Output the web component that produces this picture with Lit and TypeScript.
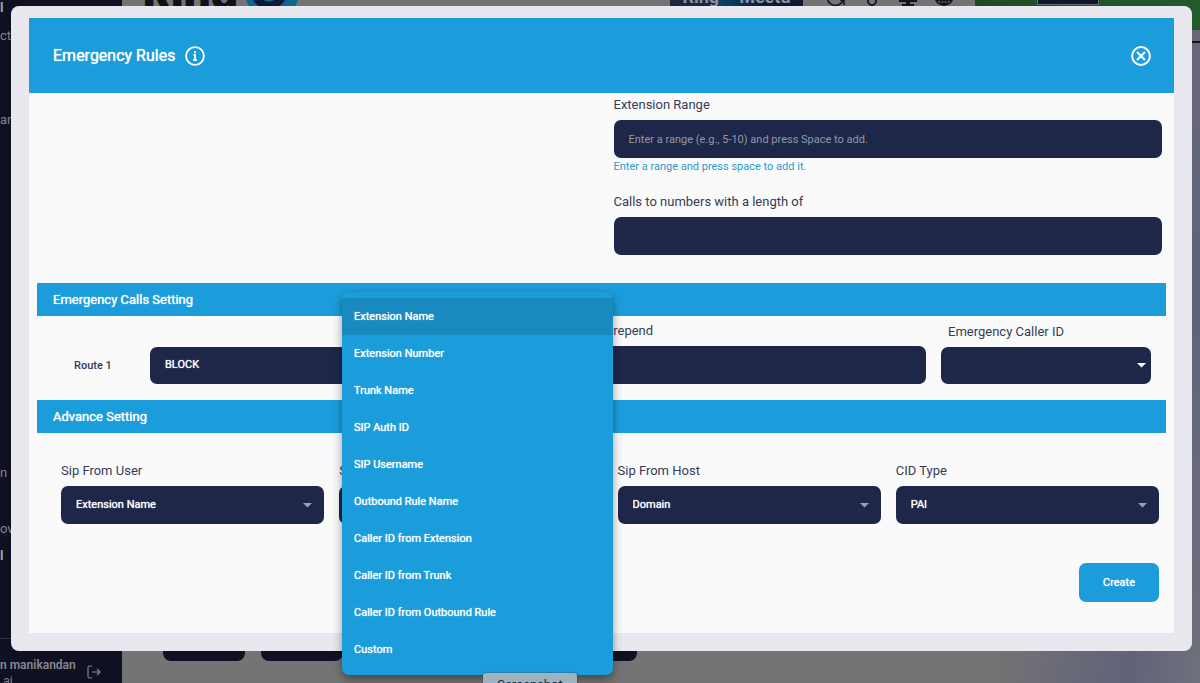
import { LitElement, html, css } from "lit";
import { customElement, property, state } from "lit/decorators.js";

const SIDE_ITEMS = [
  { text: "l", gap: 0, strong: true },
  { text: "cte", gap: 12, strong: false },
  { text: "an", gap: 68, strong: false },
  { text: "n", gap: 337, strong: false },
  { text: "ov", gap: 40, strong: false },
  { text: "l", gap: 11, strong: true },
];

const SIP_OPTIONS = [
  "Extension Name",
  "Extension Number",
  "Trunk Name",
  "SIP Auth ID",
  "SIP Username",
  "Outbound Rule Name",
  "Caller ID from Extension",
  "Caller ID from Trunk",
  "Caller ID from Outbound Rule",
  "Custom",
];

@customElement("page-backdrop")
export class PageBackdrop extends LitElement {
  static styles = css`
    :host {
      display: grid;
      grid-template-columns: 122px 1fr;
      font-family: Roboto, sans-serif;
    }
    .side {
      background: #0f1022;
      color: #85858d;
      display: flex;
      flex-direction: column;
      overflow: hidden;
      font-size: 13px;
      line-height: 16px;
    }
    .side ul {
      list-style: none;
      margin: 0;
      padding: 0;
      flex: 1;
    }
    .strong {
      font-weight: 700;
      color: #a5a5ac;
    }
    .user {
      border-top: 1px solid #303140;
      height: 45px;
      box-sizing: border-box;
      display: flex;
      justify-content: space-between;
      padding: 18px 21px 0 0;
      font-size: 12px;
    }
    .user b {
      display: block;
      font-weight: 600;
      color: #88888f;
    }
    .user svg {
      margin-top: 8px;
    }
    .main {
      display: flex;
      flex-direction: column;
      justify-content: space-between;
      overflow: hidden;
      background: linear-gradient(100deg, #747474 82%, #60627a 94%, #70717c);
    }
    .top {
      display: flex;
      align-items: flex-end;
      height: 8px;
    }
    .brand {
      display: flex;
      align-items: flex-end;
      flex: 1;
      padding-left: 21px;
      font: 900 42px/28px Inter, sans-serif;
      color: #101018;
    }
    .ad {
      display: flex;
      justify-content: center;
      align-items: flex-end;
      gap: 20px;
      width: 133px;
      height: 48px;
      background: linear-gradient(90deg, #20253f 36%, #0d4262 37%, #0c1a33 75%);
      color: #8991a0;
      font: 700 18px/22px Roboto, sans-serif;
    }
    .icons {
      display: flex;
      gap: 16px;
      padding: 0 21px 0 23px;
    }
    .promo {
      width: 225px;
      height: 30px;
      align-self: flex-start;
      background: linear-gradient(90deg, #1f4a25, #225a2b);
      display: flex;
    }
    .promo i {
      width: 60px;
      height: 4px;
      margin-left: 62px;
      background: #11162a;
      border: 1px solid #66706a;
      border-top: 0;
    }
    .rule {
      align-self: flex-end;
      width: 8px;
      height: 2px;
      margin: 33px 0 auto;
      background: #15151c;
    }
    .bottom {
      display: flex;
      gap: 16px;
      padding-left: 41px;
      height: 62px;
    }
    .bottom button {
      font: inherit;
      border: 0;
      border-radius: 8px;
      background: #0f1022;
      height: 40px;
      width: 82px;
      padding: 0;
    }
    .bottom .wide {
      width: 278px;
    }
  `;

  render() {
    return html`
      <nav class="side" aria-label="Main">
        <ul>
          ${SIDE_ITEMS.map(
            (item) => html`<li class=${item.strong ? "strong" : ""} style="padding-top:${item.gap}px">${item.text}</li>`
          )}
        </ul>
        <div class="user">
          <div><b>n manikandan</b>.ai</div>
          <svg width="14" height="14" viewBox="0 0 14 14" fill="none" stroke="#85858d" stroke-width="1.2">
            <path d="M5 1H2.5A1.5 1.5 0 0 0 1 2.5v9A1.5 1.5 0 0 0 2.5 13H5M5 7h8M10 4l3 3-3 3" />
          </svg>
        </div>
      </nav>
      <div class="main">
        <div class="top">
          <div class="brand">
            <span>Ring</span>
            <svg width="60" height="28" viewBox="0 0 60 28">
              <circle cx="34" cy="12" r="27" fill="#0d6590" />
              <circle cx="31" cy="10" r="19" fill="#10183a" />
              <path d="M25 18q6 4 12 0" fill="none" stroke="#0d6590" stroke-width="3" />
            </svg>
          </div>
          <div class="ad"><span>Ring</span><span>Meetu</span></div>
          <div class="icons">
            <svg width="20" height="20" viewBox="0 0 20 20" fill="none" stroke="#15151c" stroke-width="1.6"><path d="M17 12a8 8 0 1 1 0-5M18 17v-5h-4" /></svg>
            <svg width="20" height="20" viewBox="0 0 20 20" fill="none" stroke="#15151c" stroke-width="1.8"><path d="M10 2v8" /><circle cx="10" cy="13" r="4" /></svg>
            <svg width="20" height="20" viewBox="0 0 20 20" fill="#15151c"><path d="M1 1h18v13h-7v2h4v2H4v-2h4v-2H1z" /></svg>
            <svg width="20" height="20" viewBox="0 0 20 20" fill="none" stroke="#15151c" stroke-width="1.8"><circle cx="10" cy="8" r="9" /><ellipse cx="10" cy="8" rx="4" ry="9" /><path d="M2 12h16M10 0v17" /></svg>
          </div>
          <div class="promo"><i></i></div>
        </div>
        <div class="rule"></div>
        <div class="bottom">
          <button type="button" tabindex="-1"></button>
          <button type="button" tabindex="-1"></button>
          <button type="button" class="wide" tabindex="-1"></button>
        </div>
      </div>
    `;
  }
}

@customElement("select-field")
export class SelectField extends LitElement {
  @property() label = "";
  @property() value = "";

  static styles = css`
    :host {
      display: block;
      min-width: 0;
    }
    label {
      display: block;
      font-size: 13px;
      line-height: 20px;
      margin-bottom: 5px;
    }
    .box {
      display: grid;
      align-items: center;
    }
    .box > * {
      grid-area: 1 / 1;
    }
    select {
      appearance: none;
      width: 100%;
      height: 38px;
      border: 0;
      border-radius: 7px;
      padding: 0 40px 0 15px;
      background: #1e2749;
      color: #fff;
      font: 400 11px/16px Roboto, sans-serif;
      text-shadow: 0 0 1px currentColor;
    }
    svg {
      justify-self: end;
      margin-right: 12px;
      pointer-events: none;
    }
  `;

  render() {
    return html`
      <label for="s">${this.label}</label>
      <div class="box">
        <select id="s"><option>${this.value}</option></select>
        <svg width="9" height="5" viewBox="0 0 9 5"><path d="M0 0h9L4.500 4.500z" fill="#9a9fb0" /></svg>
      </div>
    `;
  }
}

@customElement("app-root")
export class AppRoot extends LitElement {
  @state() selected = SIP_OPTIONS[0];

  static styles = css`
    :host {
      display: grid;
      height: 100vh;
      overflow: hidden;
      position: relative;
      font-family: Roboto, sans-serif;
      color: #363a56;
    }
    page-backdrop,
    .dialog {
      grid-area: 1 / 1;
      min-width: 0;
      min-height: 0;
    }
    .dialog {
      position: relative;
      align-self: start;
      margin: 6px 8px 0 11px;
      padding: 12px 18px 18px;
      background: #e9e8ef;
      border-radius: 8px;
    }
    header {
      display: flex;
      align-items: center;
      gap: 10px;
      height: 75px;
      padding: 0 23px 0 24px;
      background: #1c9ddb;
      color: #fff;
    }
    h1,
    h2,
    .picker select,
    .create,
    .menu {
      font-weight: 400;
      text-shadow: 0 0 1px currentColor;
    }
    h1 {
      margin: 0;
      font-size: 16px;
      line-height: 24px;
    }
    header button {
      display: flex;
      border: 0;
      padding: 0;
      background: none;
      color: inherit;
    }
    header .close {
      margin-left: auto;
    }
    .body {
      background: #fafafb;
      padding: 2px 8px 31px;
    }
    .ranges {
      display: grid;
      grid-template-columns: 1fr 1fr;
      padding: 0 4px 28px 8px;
    }
    .ranges > div {
      grid-column: 2;
      padding-left: 10px;
    }
    .label {
      display: block;
      font-size: 13px;
      line-height: 20px;
    }
    .input {
      display: block;
      box-sizing: border-box;
      width: 100%;
      height: 38px;
      border: 0;
      border-radius: 7px;
      padding: 0 15px;
      background: #1e2749;
      color: #fff;
      font: 400 11px/16px Roboto, sans-serif;
    }
    .input::placeholder {
      color: #9297ab;
      opacity: 1;
    }
    .ranges .label {
      margin-bottom: 5px;
    }
    .hint {
      margin: 0;
      padding: 1px 0 17px;
      font-size: 11px;
      line-height: 16px;
      color: #2a9cc9;
    }
    h2 {
      margin: 0;
      height: 33px;
      padding: 0 16px;
      background: #1c9ddb;
      color: #fff;
      font-size: 13px;
      line-height: 33px;
    }
    .route {
      display: grid;
      grid-template-columns: 98px 1fr 328px 210px;
      column-gap: 15px;
      align-items: center;
      padding: 5px 15px 16px 0;
    }
    .route .label {
      padding-left: 7px;
      margin-bottom: 5px;
    }
    .name {
      padding: 25px 0 0 37px;
      font-size: 11px;
      font-weight: 500;
    }
    .action {
      padding-top: 25px;
    }
    .picker {
      display: grid;
      align-items: center;
    }
    .picker > * {
      grid-area: 1 / 1;
    }
    .picker select {
      appearance: none;
      width: 100%;
      height: 37px;
      border: 0;
      border-radius: 7px;
      padding: 0 15px;
      background: #1e2749;
      color: #fff;
      font: 400 11px/16px Roboto, sans-serif;
    }
    .picker svg {
      justify-self: end;
      margin-right: 5px;
      pointer-events: none;
    }
    .advance {
      display: grid;
      grid-template-columns: repeat(4, 1fr);
      gap: 15px;
      padding: 28px 7px 0 24px;
    }
    footer {
      display: flex;
      justify-content: flex-end;
      padding: 39px 7px 0;
    }
    .create {
      border: 0;
      border-radius: 7px;
      width: 80px;
      height: 39px;
      background: #1c9ddb;
      color: #fff;
      font: 400 11px/16px Roboto, sans-serif;
    }
    .menu {
      position: absolute;
      left: 342px;
      top: 292px;
      width: 271px;
      margin: 0;
      padding: 6px 0 7px;
      box-sizing: border-box;
      list-style: none;
      background: #1c9ddb;
      border-radius: 7px;
      box-shadow: 0 4px 10px rgba(0, 0, 0, 0.4);
      color: #fff;
      font-size: 11px;
      line-height: 37px;
    }
    .menu li {
      padding: 0 12px;
    }
    .menu .on {
      background: #188abf;
    }
    .tip {
      position: absolute;
      left: 483px;
      top: 673px;
      width: 94px;
      text-align: center;
      border-radius: 3px;
      background: #9bb4c0;
      color: #1f2a35;
      font-size: 13px;
      line-height: 24px;
      box-shadow: 0 0 2px #333;
    }
  `;

  render() {
    return html`
      <page-backdrop></page-backdrop>
      <section class="dialog" role="dialog" aria-labelledby="title">
        <header>
          <h1 id="title">Emergency Rules</h1>
          <button type="button" aria-label="Information">
            <svg width="20" height="20" viewBox="0 0 20 20" fill="none" stroke="currentColor" stroke-width="1.8">
              <circle cx="10" cy="10" r="8.900" />
              <path d="M8.500 9h1.600v5M8.300 14h3.600M10 5.200v2" />
            </svg>
          </button>
          <button type="button" class="close" aria-label="Close">
            <svg width="20" height="20" viewBox="0 0 20 20" fill="none" stroke="currentColor" stroke-width="2">
              <circle cx="10" cy="10" r="8.900" />
              <path d="M6 6l8 8M14 6l-8 8" />
            </svg>
          </button>
        </header>
        <form class="body" @submit=${(e: Event) => e.preventDefault()}>
          <div class="ranges">
            <div>
              <label class="label" for="range">Extension Range</label>
              <input class="input" id="range" placeholder="Enter a range (e.g., 5-10) and press Space to add." />
              <p class="hint">Enter a range and press space to add it.</p>
              <label class="label" for="length">Calls to numbers with a length of</label>
              <input class="input" id="length" />
            </div>
          </div>
          <h2>Emergency Calls Setting</h2>
          <div class="route">
            <label class="name" for="action">Route 1</label>
            <div class="picker action">
              <select id="action"><option>BLOCK</option></select>
            </div>
            <div>
              <label class="label" for="prepend">Prepend</label>
              <input class="input" id="prepend" />
            </div>
            <div>
              <label class="label" for="caller">Emergency Caller ID</label>
              <div class="picker">
                <select id="caller"><option></option></select>
                <svg width="9" height="5" viewBox="0 0 9 5"><path d="M0 0h9L4.500 4.500z" fill="#fff" /></svg>
              </div>
            </div>
          </div>
          <h2>Advance Setting</h2>
          <div class="advance">
            <select-field label="Sip From User" value="Extension Name"></select-field>
            <select-field label="S"></select-field>
            <select-field label="Sip From Host" value="Domain"></select-field>
            <select-field label="CID Type" value="PAI"></select-field>
          </div>
          <footer><button class="create" type="submit">Create</button></footer>
        </form>
      </section>
      <ul class="menu" role="listbox" aria-label="Sip source">
        ${SIP_OPTIONS.map(
          (o) => html`<li
            role="option"
            class=${o === this.selected ? "on" : ""}
            aria-selected=${o === this.selected}
            @click=${() => (this.selected = o)}
          >${o}</li>`
        )}
      </ul>
      <div class="tip">Screenshot</div>
    `;
  }
}
